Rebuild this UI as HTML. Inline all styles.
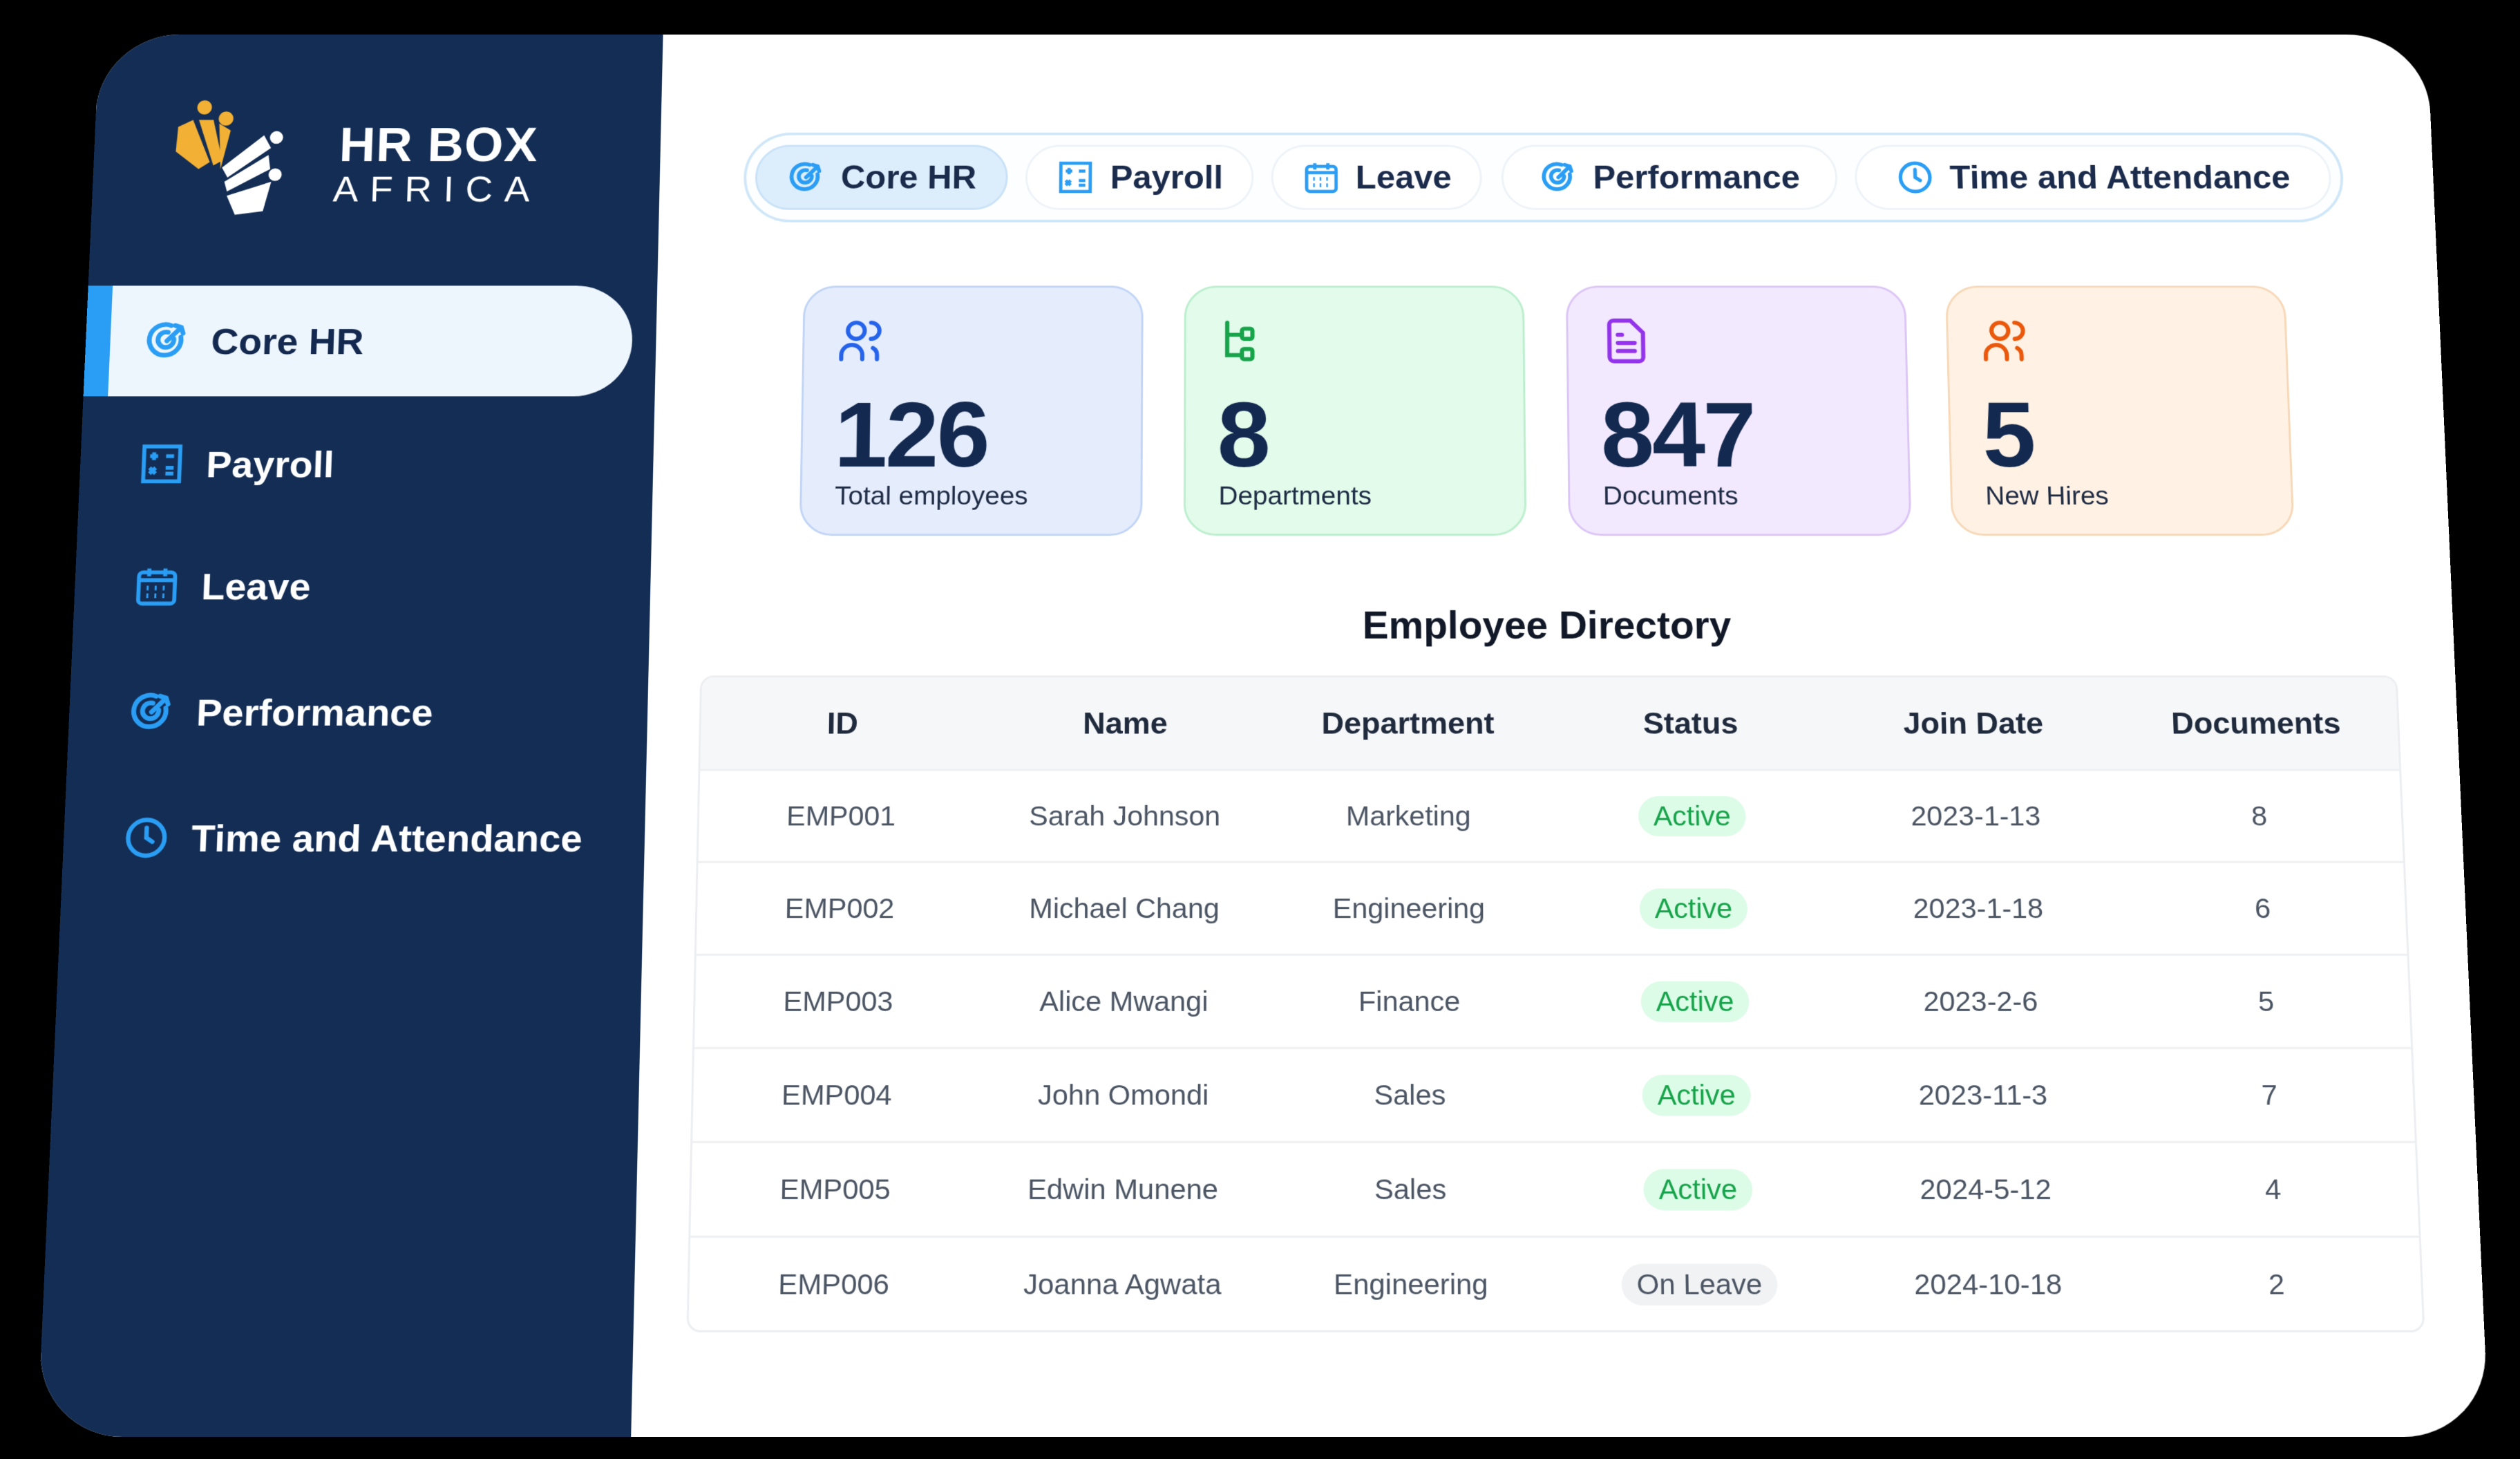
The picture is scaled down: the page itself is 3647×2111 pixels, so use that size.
<!DOCTYPE html>
<html><head><meta charset="utf-8"><style>
*{margin:0;padding:0;box-sizing:border-box}
html,body{width:3647px;height:2111px;overflow:hidden;background:#000;font-family:"Liberation Sans",sans-serif}
#scr{position:absolute;left:100px;top:3px;width:3456px;height:2070px;background:#fff;border-radius:120px;overflow:hidden;transform:perspective(8000px) rotateX(11.6deg);transform-origin:50% 50%}
#side{position:absolute;left:0;top:0;width:837px;height:100%;background:#142d54}
.abs{position:absolute}
.logo1{left:362px;top:128px;color:#fff;font-weight:bold;font-size:74px;letter-spacing:1px}
.logo2{left:355px;top:206px;color:#fff;font-size:56px;letter-spacing:17px}
.pill{left:0;top:387px;width:802px;height:168px;background:#eef6fd;border-radius:0 84px 84px 0;border-left:36px solid #2a9df4}
.sitem{left:0;height:100px;width:837px;display:flex;align-items:center;color:#fff;font-weight:bold;font-size:56px}
.sitem svg{position:absolute;left:84px;width:70px;height:70px}
.sitem span{position:absolute;left:184px}
#tabs{left:961px;top:152px;width:2362px;height:138px;border:4px solid #cfe7f8;border-radius:69px;background:#fdfeff}
.tab{top:171px;height:100px;border:3px solid #edf3f8;border-radius:50px;background:#fff;display:flex;align-items:center;justify-content:center;gap:22px;font-weight:bold;font-size:50px;color:#1b2b4b}
.tab svg{width:58px;height:58px}
.tab.act{background:#dcedfc;border-color:#c9e2f7}
.card{top:387px;width:500px;height:378px;border-radius:48px;border:3px solid}
.card svg{position:absolute;left:48px;top:44px;width:74px;height:74px}
.card .n{position:absolute;left:46px;top:142px;font-size:140px;font-weight:bold;color:#13294f;letter-spacing:-3px}
.card .l{position:absolute;left:48px;top:294px;font-size:39px;color:#1e2b44}
h2{position:absolute;left:1500px;width:1280px;text-align:center;top:866px;font-size:57px;color:#111827}
#tbl{left:912px;top:973px;width:2460px;height:950px;border:3px solid #eceef1;border-radius:20px;overflow:hidden}
.row{display:flex;height:135px;align-items:center;border-top:3px solid #eef0f2}
.row div{width:410px;text-align:center;font-size:41px;color:#4b5563}
.hdr{background:#f6f7f9;border-top:none;height:135px}
.hdr div{font-weight:bold;color:#1f2a3d;font-size:45px}
.b{display:inline-block;padding:6px 22px;border-radius:30px;background:#dcfce7;color:#16a34a}
.g{background:#f1f2f4;color:#4b5563}
</style></head><body>
<div id="scr">
<div id="side">
 <svg class="abs" style="left:112px;top:100px" width="200" height="184" viewBox="0 0 185 170">
  <circle cx="45" cy="12" r="10" fill="#f2b035"/><circle cx="75" cy="28" r="10" fill="#f2b035"/>
  <path d="M10 40 L30 30 L55 90 L40 100 L8 75 Z" fill="#f2b035"/>
  <path d="M38 30 L58 30 L72 88 L60 95 Z" fill="#f2b035"/>
  <path d="M66 35 L82 45 L70 100 Z" fill="#f2b035"/>
  <circle cx="145" cy="55" r="9" fill="#fff"/><circle cx="145" cy="108" r="9" fill="#fff"/>
  <path d="M72 98 L128 52 L138 70 L80 112 Z" fill="#fff"/>
  <path d="M76 118 L135 80 L138 100 L80 132 Z" fill="#fff"/>
  <path d="M80 138 L140 118 L130 160 L92 165 Z" fill="#fff"/>
 </svg>
 <div class="abs logo1">HR BOX</div>
 <div class="abs logo2">AFRICA</div>
 <div class="abs pill"></div>
 <div class="abs sitem" style="top:421px;color:#13294f">
  <svg viewBox="0 0 24 24" fill="none" stroke="#2a9df4" stroke-width="2.4" stroke-linecap="round"><path d="M19 10a8 8 0 1 1-5-6"/><path d="M15.5 11a4 4 0 1 1-3-3.5"/><path d="M12 12l7-7M16 4l3 1 1 3"/></svg><span>Core HR</span></div>
 <div class="abs sitem" style="top:607px">
  <svg viewBox="0 0 24 24" fill="none" stroke="#2a9df4" stroke-width="2"><rect x="3" y="3" width="18" height="18"/><path d="M6 8h4M8 6v4M14 8h4M6 14l3 3M9 14l-3 3M14 14h4M14 17h4"/></svg><span>Payroll</span></div>
 <div class="abs sitem" style="top:790px">
  <svg viewBox="0 0 24 24" fill="none" stroke="#2a9df4" stroke-width="2"><rect x="3" y="5" width="18" height="16" rx="2"/><path d="M3 9h18M8 3v4M16 3v4"/><path d="M7 13h1M11 13h1M15 13h1M7 17h1M11 17h1M15 17h1" stroke-width="2.4"/></svg><span>Leave</span></div>
 <div class="abs sitem" style="top:977px">
  <svg viewBox="0 0 24 24" fill="none" stroke="#2a9df4" stroke-width="2.4" stroke-linecap="round"><path d="M19 10a8 8 0 1 1-5-6"/><path d="M15.5 11a4 4 0 1 1-3-3.5"/><path d="M12 12l7-7M16 4l3 1 1 3"/></svg><span>Performance</span></div>
 <div class="abs sitem" style="top:1162px">
  <svg viewBox="0 0 24 24" fill="none" stroke="#2a9df4" stroke-width="2.2" stroke-linecap="round"><circle cx="12" cy="12" r="9"/><path d="M12 7v5l3 2"/></svg><span>Time and Attendance</span></div>
</div>

<div class="abs" id="tabs"></div>
<div class="abs tab act" style="left:978px;width:373px"><svg viewBox="0 0 24 24" fill="none" stroke="#2a9df4" stroke-width="2.4" stroke-linecap="round"><path d="M19 10a8 8 0 1 1-5-6"/><path d="M15.5 11a4 4 0 1 1-3-3.5"/><path d="M12 12l7-7M16 4l3 1 1 3"/></svg>Core HR</div>
<div class="abs tab" style="left:1377px;width:337px"><svg viewBox="0 0 24 24" fill="none" stroke="#2a9df4" stroke-width="2"><rect x="3" y="3" width="18" height="18"/><path d="M6 8h4M8 6v4M14 8h4M6 14l3 3M9 14l-3 3M14 14h4M14 17h4"/></svg>Payroll</div>
<div class="abs tab" style="left:1740px;width:311px"><svg viewBox="0 0 24 24" fill="none" stroke="#2a9df4" stroke-width="2"><rect x="3" y="5" width="18" height="16" rx="2"/><path d="M3 9h18M8 3v4M16 3v4"/><path d="M7 13h1M11 13h1M15 13h1M7 17h1M11 17h1M15 17h1" stroke-width="2.4"/></svg>Leave</div>
<div class="abs tab" style="left:2080px;width:496px"><svg viewBox="0 0 24 24" fill="none" stroke="#2a9df4" stroke-width="2.4" stroke-linecap="round"><path d="M19 10a8 8 0 1 1-5-6"/><path d="M15.5 11a4 4 0 1 1-3-3.5"/><path d="M12 12l7-7M16 4l3 1 1 3"/></svg>Performance</div>
<div class="abs tab" style="left:2602px;width:703px"><svg viewBox="0 0 24 24" fill="none" stroke="#2a9df4" stroke-width="2.2" stroke-linecap="round"><circle cx="12" cy="12" r="9"/><path d="M12 7v5l3 2"/></svg>Time and Attendance</div>

<div class="abs card" style="left:1052px;background:#e5edfd;border-color:#c2d5f6">
 <svg viewBox="0 0 24 24" fill="none" stroke="#2563eb" stroke-width="2" stroke-linecap="round"><circle cx="9" cy="7" r="4"/><path d="M2 21v-2a5 5 0 0 1 10 0v2M16 3a4 4 0 0 1 0 8M19 21v-2a4 4 0 0 0-2-3.5"/></svg>
 <div class="n">126</div><div class="l">Total employees</div></div>
<div class="abs card" style="left:1612px;background:#e2fbea;border-color:#bdefcf">
 <svg viewBox="0 0 24 24" fill="none" stroke="#16a34a" stroke-width="2" stroke-linecap="round"><path d="M4 3v16h7M4 9h7"/><rect x="11" y="6" width="5" height="5" rx="1"/><rect x="11" y="16" width="5" height="5" rx="1"/></svg>
 <div class="n">8</div><div class="l">Departments</div></div>
<div class="abs card" style="left:2173px;background:#f3e9fe;border-color:#dcc6f6">
 <svg viewBox="0 0 24 24" fill="none" stroke="#9333ea" stroke-width="2" stroke-linecap="round"><path d="M14 2H6a2 2 0 0 0-2 2v16a2 2 0 0 0 2 2h12a2 2 0 0 0 2-2V8z"/><path d="M8 13h8M8 17h8M8 9h2"/></svg>
 <div class="n">847</div><div class="l">Documents</div></div>
<div class="abs card" style="left:2731px;background:#fff2e4;border-color:#f7d8b8">
 <svg viewBox="0 0 24 24" fill="none" stroke="#ea580c" stroke-width="2" stroke-linecap="round"><circle cx="9" cy="7" r="4"/><path d="M2 21v-2a5 5 0 0 1 10 0v2M16 3a4 4 0 0 1 0 8M19 21v-2a4 4 0 0 0-2-3.5"/></svg>
 <div class="n">5</div><div class="l">New Hires</div></div>

<h2>Employee Directory</h2>
<div class="abs" id="tbl">
 <div class="row hdr"><div>ID</div><div>Name</div><div>Department</div><div>Status</div><div>Join Date</div><div>Documents</div></div>
 <div class="row"><div>EMP001</div><div>Sarah Johnson</div><div>Marketing</div><div><span class="b">Active</span></div><div>2023-1-13</div><div>8</div></div>
 <div class="row"><div>EMP002</div><div>Michael Chang</div><div>Engineering</div><div><span class="b">Active</span></div><div>2023-1-18</div><div>6</div></div>
 <div class="row"><div>EMP003</div><div>Alice Mwangi</div><div>Finance</div><div><span class="b">Active</span></div><div>2023-2-6</div><div>5</div></div>
 <div class="row"><div>EMP004</div><div>John Omondi</div><div>Sales</div><div><span class="b">Active</span></div><div>2023-11-3</div><div>7</div></div>
 <div class="row"><div>EMP005</div><div>Edwin Munene</div><div>Sales</div><div><span class="b">Active</span></div><div>2024-5-12</div><div>4</div></div>
 <div class="row"><div>EMP006</div><div>Joanna Agwata</div><div>Engineering</div><div><span class="b g">On Leave</span></div><div>2024-10-18</div><div>2</div></div>
</div>
</div>
</body></html>
